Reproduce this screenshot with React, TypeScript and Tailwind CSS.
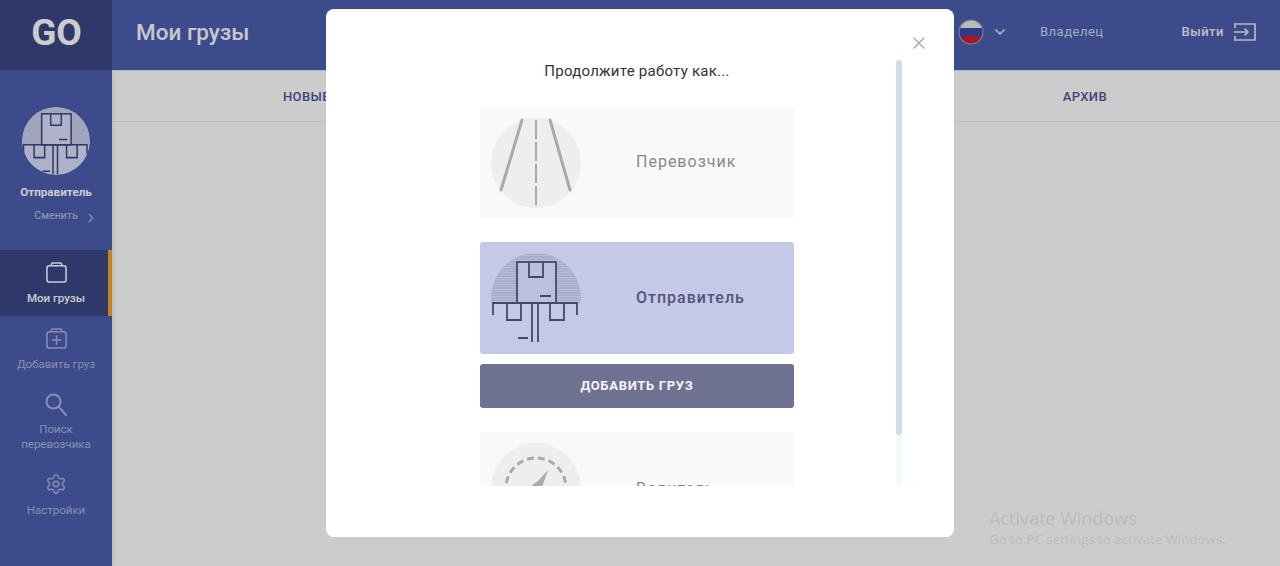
import { ChevronDown, ChevronRight, Settings, X } from "lucide-react";

const f = { fontFamily: "Roboto, 'Noto Sans', sans-serif" };

function Cargo({ hatch, fill, line, bg, uid, sw = 1.8 }: { hatch: string; fill?: string; line: string; bg: string; uid: string; sw?: number }) {
  return (
    <svg viewBox="0 0 90 90" className="w-full h-full" fill="none">
      <defs>
        <pattern id={uid} width="2.4" height="2.4" patternUnits="userSpaceOnUse">
          <rect width="2.4" height="2.4" fill={hatch} />
          <rect width="2.4" height="0.8" fill={bg} />
        </pattern>
        <clipPath id={uid + "c"}>
          <rect x="0" y="0" width="90" height="50" />
        </clipPath>
      </defs>
      {fill && <circle cx="45" cy="45" r="45" fill={fill} />}
      <circle cx="45" cy="45" r="45" fill={`url(#${uid})`} clipPath={`url(#${uid}c)`} />
      <g stroke={line} strokeWidth={sw}>
        <rect x="26" y="9" width="39" height="41" fill={fill ?? bg} />
        <path d="M38 9v15h14V9M49 43h11" />
        <path d="M2 62V50h84v12" />
        <path d="M16 50v17h14V50M59 50v17h14V50" />
        <path d="M41 50v39M47 50v39M27 85h10" />
      </g>
    </svg>
  );
}

function Road() {
  return (
    <svg viewBox="0 0 90 90" className="w-full h-full" fill="none">
      <circle cx="45" cy="45" r="45" fill="#eeeeee" />
      <path d="M31 2 10 72M59 2l20 70" stroke="#aaaaaa" strokeWidth="3" strokeLinecap="round" />
      <path d="M45 2v88" stroke="#aaaaaa" strokeWidth="2" strokeDasharray="19 3" />
    </svg>
  );
}

function Compass() {
  return (
    <svg viewBox="0 0 90 90" className="w-full h-full" fill="none">
      <circle cx="45" cy="45" r="45" fill="#eeeeee" />
      <circle cx="45" cy="45" r="30" stroke="#aaaaaa" strokeWidth="3" strokeDasharray="7 4" />
      <path d="M57 27 51 44 39 44 48 37Z" fill="#aaaaaa" />
    </svg>
  );
}

function Bag({ plus }: { plus?: boolean }) {
  return (
    <svg width="21" height="21" viewBox="0 0 22 22" fill="none" stroke="currentColor" strokeWidth="1.6">
      <rect x="1" y="4" width="20" height="17" rx="2.5" />
      <path d="M5.5 4V2.5A1.5 1.5 0 0 1 7 1h8a1.5 1.5 0 0 1 1.5 1.5V4" />
      {plus && <path d="M11 7.5v10M6 12.5h10" />}
    </svg>
  );
}

function Magnifier() {
  return (
    <svg width="22" height="23" viewBox="0 0 22 23" fill="none" stroke="currentColor" strokeWidth="2" strokeLinecap="round">
      <circle cx="8.5" cy="8.5" r="7" />
      <path d="M13.7 13.7 21 22" />
    </svg>
  );
}

function Exit() {
  return (
    <svg width="22" height="18" viewBox="0 0 22 18" fill="none" stroke="#e4e6f2" strokeWidth="1.7">
      <path d="M1 5V1h20v16H1v-4" />
      <path d="M0 9h14M10.5 5.5 14 9l-3.5 3.5" />
    </svg>
  );
}

function Flag() {
  return (
    <svg width="26" height="26" viewBox="0 0 26 26">
      <defs>
        <clipPath id="fl">
          <circle cx="13" cy="13" r="12" />
        </clipPath>
      </defs>
      <g clipPath="url(#fl)">
        <rect width="26" height="9" fill="#e8e8ee" />
        <rect y="9" width="26" height="8" fill="#3a4aa8" />
        <rect y="17" width="26" height="9" fill="#d0202c" />
      </g>
      <circle cx="13" cy="13" r="12" fill="none" stroke="#9a9aaa" strokeWidth="1.2" />
    </svg>
  );
}

function NavItem({ icon, label, active, h, tight }: { icon: React.ReactNode; label: React.ReactNode; active?: boolean; h: string; tight?: boolean }) {
  return (
    <div
      className={`${h} flex flex-col items-center pt-[9px] border-r-4 text-[11.5px] leading-[15px] text-center ${
        active ? "bg-[#3a4785] border-[#f5a623] text-white font-medium" : "border-transparent text-[#aab2e0] border-b-[#5263ab]"
      }`}
    >
      <div className="h-[26px] flex items-center ml-1">{icon}</div>
      <div className={`${tight ? "mt-[5px]" : "mt-[6px]"} ml-1`}>{label}</div>
    </div>
  );
}

export default function App() {
  return (
    <div className="relative h-screen w-full overflow-hidden bg-white flex flex-col" style={f}>
      <header className="h-[70px] flex shrink-0 bg-[#4c5eaf]">
        <div className="w-[112px] bg-[#3a4785] flex items-center justify-center pl-[1px] pb-[5px]">
          <span className="text-[37px] font-bold text-white">GO</span>
        </div>
        <div className="ml-[24px] flex items-center text-[22.5px] font-medium text-[#fafbff] pb-[5px]">Мои грузы</div>
        <div className="ml-auto flex items-center pb-[6px] pr-[24px]">
          <Flag />
          <ChevronDown size={16} strokeWidth={2.5} className="ml-[8px] text-[#e0e3f0]" />
          <span className="ml-[32px] text-[13px] tracking-[0.5px] text-[#d0d5ee]">Владелец</span>
          <span className="ml-[78px] text-[13px] font-medium tracking-[0.5px] text-[#eef0fa]">Выйти</span>
          <span className="ml-[10px] flex">
            <Exit />
          </span>
        </div>
      </header>
      <div className="flex-1 flex min-h-0">
        <aside className="relative w-[112px] bg-[#4c5eaf] flex flex-col shrink-0 shadow-[2px_0_4px_rgba(0,0,0,0.08)]">
          <div className="h-[180px] flex flex-col items-center pt-[37px]">
            <div className="w-[68px] h-[68px] rounded-full overflow-hidden">
              <Cargo uid="av" hatch="#c6cbea" fill="#dbdff8" line="#3b4682" bg="#d2d6f2" sw={2} />
            </div>
            <div className="mt-[9px] text-[11.7px] font-bold text-white">Отправитель</div>
            <div className="mt-[6px] flex items-center text-[10.5px] font-medium text-[#a9b1dd] ml-[20px]">
              Сменить
              <ChevronRight size={14} strokeWidth={2.2} className="ml-[6px] mt-[3px]" />
            </div>
          </div>
          <NavItem h="h-[66px]" active icon={<Bag />} label="Мои грузы" />
          <NavItem h="h-[66px]" icon={<Bag plus />} label="Добавить груз" />
          <NavItem
            h="h-[80px]"
            tight
            icon={<Magnifier />}
            label={
              <>
                Поиск
                <br />
                перевозчика
              </>
            }
          />
          <NavItem h="h-[66px]" icon={<Settings size={22} strokeWidth={1.6} />} label="Настройки" />
        </aside>
        <main className="flex-1 min-w-0 border-t border-t-[#dde1ec]">
          <div className="h-[52px] -mt-px border-b border-b-[#eeeeee] flex items-center justify-between pl-[171px] pr-[173px] pt-[3px] text-[13px] font-medium tracking-[0.4px] text-[#4c5a96]">
            <span>НОВЫЕ</span>
            <span>АРХИВ</span>
          </div>
        </main>
      </div>

      <div className="absolute inset-0 bg-black/20 flex items-start justify-center pt-[9px]">
        <div className="relative w-[628px] h-[528px] bg-white rounded-[8px] pt-[51px] flex items-start">
          <button className="absolute top-[24px] right-[25px] text-[#aaaaaa]">
            <X size={20} strokeWidth={1.6} />
          </button>
          <div className="ml-[154px] w-[314px] h-[426px] overflow-hidden shrink-0">
            <div className="h-[22px] flex items-center justify-center text-[15px] tracking-[0.25px] text-[#333333]">Продолжите работу как...</div>
            <div className="mt-[25px] h-[111px] bg-[#f9f9f9] flex items-center pl-[11px]">
              <div className="w-[90px] h-[90px] shrink-0">
                <Road />
              </div>
              <span className="ml-[55px] mb-[2px] text-[16px] tracking-[1px] text-[#888888]">Перевозчик</span>
            </div>
            <div className="mt-[24px] h-[112px] bg-[#c5c9e8] rounded-[3px] flex items-center pl-[11px]">
              <div className="w-[90px] h-[90px] shrink-0">
                <Cargo uid="ca" hatch="#a9adcc" line="#44496a" bg="#bcc0de" />
              </div>
              <span className="ml-[55px] text-[16px] font-medium tracking-[1px] text-[#52557a]">Отправитель</span>
            </div>
            <button className="mt-[10px] w-full h-[44px] bg-[#6e7290] rounded-[3px] text-[13px] font-bold tracking-[0.7px] text-[#f5f5f8]">
              ДОБАВИТЬ ГРУЗ
            </button>
            <div className="mt-[24px] h-[112px] bg-[#f9f9f9] flex items-center pl-[11px]">
              <div className="w-[90px] h-[90px] shrink-0">
                <Compass />
              </div>
              <span className="ml-[55px] mt-[1px] text-[16px] tracking-[1px] text-[#888888]">Водитель</span>
            </div>
          </div>
          <div className="ml-[102px] w-[6px] h-[426px] bg-[#f4f8fa] rounded-[3px]">
            <div className="h-[375px] bg-[#d3dce3] rounded-[3px]" />
          </div>
        </div>
      </div>

      <div className="absolute left-[989px] top-[507px] text-[#bcbcbc]" style={{ fontFamily: "'Open Sans', sans-serif" }}>
        <div className="text-[18px] leading-[22px]">Activate Windows</div>
        <div className="text-[13.3px] leading-[20px]">Go to PC settings to activate Windows.</div>
      </div>
    </div>
  );
}
